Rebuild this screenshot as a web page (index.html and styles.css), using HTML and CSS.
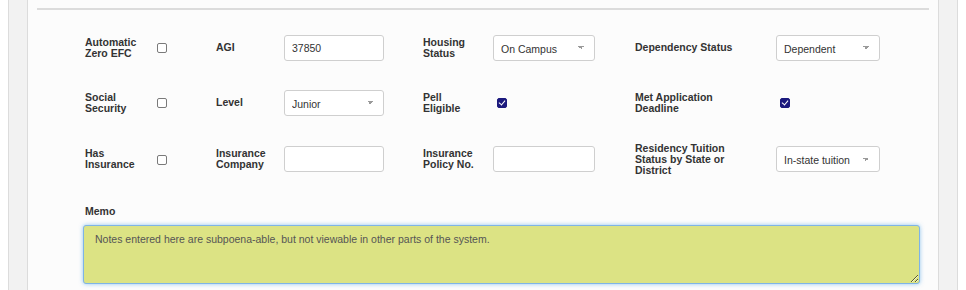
FILE: index.html
```html
<!DOCTYPE html>
<html lang="en">

<head>
    <meta charset="UTF-8">
    <meta name="viewport" content="width=device-width, initial-scale=1.0">
    <title>Student Aid Details</title>
    <link rel="stylesheet" href="styles.css">
</head>

<body>
    <div class="page">
        <div class="panel">
            <div class="divider"></div>

            <!-- Aid fields -->
            <div class="fields">
                <label class="field-label">Automatic<br>Zero EFC</label>
                <div class="control"><input type="checkbox" class="check"></div>
                <label class="field-label">AGI</label>
                <div class="control"><input type="text" class="text-input" value="37850"></div>
                <label class="field-label">Housing<br>Status</label>
                <div class="control">
                    <select class="select wide">
                        <option>On Campus</option>
                    </select>
                </div>
                <label class="field-label">Dependency Status</label>
                <div class="control">
                    <select class="select wider">
                        <option>Dependent</option>
                    </select>
                </div>

                <label class="field-label">Social<br>Security</label>
                <div class="control"><input type="checkbox" class="check"></div>
                <label class="field-label">Level</label>
                <div class="control">
                    <select class="select">
                        <option>Junior</option>
                    </select>
                </div>
                <label class="field-label">Pell<br>Eligible</label>
                <div class="control"><input type="checkbox" class="check shift" checked></div>
                <label class="field-label">Met Application<br>Deadline</label>
                <div class="control"><input type="checkbox" class="check shift" checked></div>

                <label class="field-label">Has<br>Insurance</label>
                <div class="control"><input type="checkbox" class="check"></div>
                <label class="field-label">Insurance<br>Company</label>
                <div class="control"><input type="text" class="text-input"></div>
                <label class="field-label">Insurance<br>Policy No.</label>
                <div class="control"><input type="text" class="text-input wide"></div>
                <label class="field-label">Residency Tuition<br>Status by State or<br>District</label>
                <div class="control">
                    <select class="select wider">
                        <option>In-state tuition</option>
                    </select>
                </div>
            </div>

            <!-- Memo -->
            <div class="memo">
                <label class="field-label memo-label">Memo</label>
                <textarea class="memo-box">Notes entered here are subpoena-able, but not viewable in other parts of the system.</textarea>
            </div>
        </div>
    </div>
</body>

</html>
```

FILE: styles.css
```css
html,
body {
    margin: 0;
    height: 100%;
    background-color: #ffffff;
    font-family: "Liberation Sans", Arial, sans-serif;
    color: #333;
    overflow: hidden;
}

.page {
    margin: 0 8px;
    height: 100%;
    padding: 0 18px;
    background-color: #f2f2f2;
    border-left: 1px solid #dcdcdc;
    border-right: 1px solid #dcdcdc;
}

.panel {
    height: 100%;
    padding: 8px 9px 0;
    background-color: #fcfcfc;
    border-left: 1px solid #dcdcdc;
    border-right: 1px solid #dcdcdc;
}

.divider {
    height: 2px;
    background-color: #dcdcdc;
}

/* Grid of fields */
.fields {
    display: grid;
    grid-template-columns: 72px 59px 68px 139px 70px 142px 141px 1fr;
    grid-template-rows: 55px 55px 58px;
    align-items: center;
    margin: 10px 0 0 48px;
}

.field-label {
    font-size: 10.5px;
    font-weight: bold;
    line-height: 11px;
    color: #333;
}

.control {
    display: flex;
    align-items: center;
}

.check {
    appearance: none;
    width: 10px;
    height: 10px;
    margin: 1px 0 0;
    border: 1px solid #7a7a7a;
    border-radius: 2px;
    background-color: #fff;
    position: relative;
}

.check.shift {
    margin-left: 4px;
}

.check:checked {
    background-color: #1c1a7e;
    border-color: #1c1a7e;
}

.check:checked::after {
    content: "";
    position: absolute;
    left: 2px;
    top: 0px;
    width: 3px;
    height: 5px;
    border: solid #fff;
    border-width: 0 1.5px 1.5px 0;
    transform: rotate(40deg);
}

.text-input,
.select {
    box-sizing: border-box;
    width: 100px;
    height: 26px;
    margin: 0;
    padding: 0 7px;
    border: 1px solid #cfcfcf;
    border-radius: 3px;
    background-color: #fff;
    font-family: "Liberation Sans", Arial, sans-serif;
    font-size: 10.5px;
    color: #333;
    outline: none;
}

.text-input.wide,
.select.wide {
    width: 102px;
}

.select.wider {
    width: 104px;
}

.select {
    appearance: none;
    padding-top: 2px;
    background-image: linear-gradient(45deg, transparent 50%, #9a9a9a 50%), linear-gradient(-45deg, transparent 50%, #9a9a9a 50%);
    background-size: 3px 3px, 3px 3px;
    background-position: right 13px center, right 10px center;
    background-repeat: no-repeat;
}

/* Memo */
.memo {
    margin: 18px 0 0 46px;
}

.memo-label {
    display: block;
    padding-left: 2px;
    margin-bottom: 8px;
}

.memo-box {
    display: block;
    box-sizing: border-box;
    width: 837px;
    height: 59px;
    margin: 0;
    padding: 7px 11px;
    border: 1px solid #7fb4e6;
    border-radius: 3px;
    background-color: #dce384;
    box-shadow: 0 0 4px rgba(102, 175, 233, 0.7);
    font-family: "Liberation Sans", Arial, sans-serif;
    font-size: 10.5px;
    color: #555;
    outline: none;
}
```
